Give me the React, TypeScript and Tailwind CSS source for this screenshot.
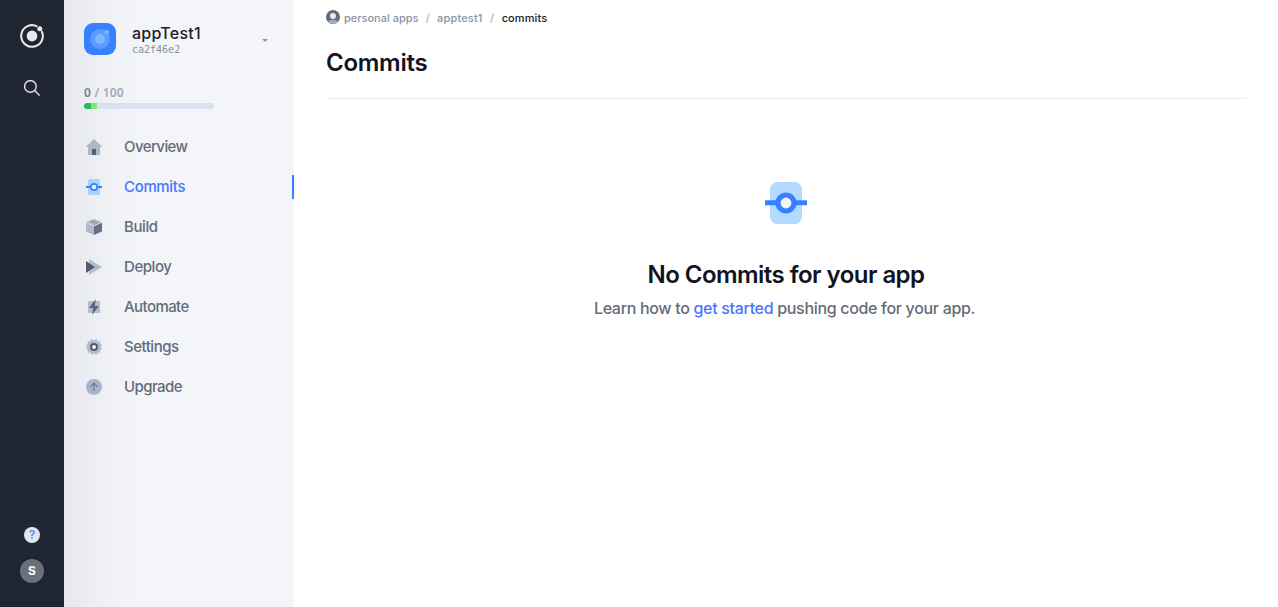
import React from 'react';

function CommitIcon({ size }: { size: string }) {
  return (
    <svg viewBox="0 0 42 42" className={size}>
      <rect x="5" width="32" height="42" rx="7.5" fill="#b2dbff" />
      <path d="M0 18.2h42v5H0z" fill="#3880ff" />
      <circle cx="21" cy="21" r="8" fill="#f3f5f9" stroke="#3880ff" strokeWidth="5.2" />
    </svg>
  );
}

function SmallCommitIcon() {
  return (
    <svg viewBox="0 0 16 16" className="size-4">
      <rect x="2" width="12" height="16" rx="1.8" fill="#a9d4fa" />
      <path d="M0 7h16v2H0z" fill="#3880ff" />
      <circle cx="8" cy="8" r="3.2" fill="#e3f0ff" stroke="#3880ff" strokeWidth="1.7" />
    </svg>
  );
}

const icons: Record<string, React.ReactNode> = {
  Overview: (
    <svg viewBox="0 0 16 16" className="size-4">
      <path d="M8 0 0 7.5V8h2v8h12V8h2v-.5z" fill="#adb9c9" />
      <path d="M6 10h4v6H6z" fill="#585f74" />
    </svg>
  ),
  Commits: <SmallCommitIcon />,
  Build: (
    <svg viewBox="0 0 16 16" className="size-4">
      <path d="m0 3.8 8 3.5V16l-8-3.6z" fill="#b0b9cb" />
      <path d="m8 7.3 8-3.5v8.6L8 16z" fill="#697084" />
      <path d="M8 0 15.8 3.2 8 6.6.2 3.2z" fill="#a9b3c6" />
      <path d="m4.4 2 6.6 2.8 1-.4-6.6-2.8z" fill="#7a8398" />
    </svg>
  ),
  Deploy: (
    <svg viewBox="0 0 16 16" className="size-4">
      <path d="m3 0 13 8-13 8z" fill="#b1bccc" />
      <path d="m0 2 9 6-9 6z" fill="#525a70" />
    </svg>
  ),
  Automate: (
    <svg viewBox="0 0 16 16" className="size-4">
      <rect x="2" y="2" width="12" height="12" rx="1.2" fill="#b1bcd0" />
      <path d="M9.6.3 3 9h4.1l-.9 6.7L13 7H8.9z" fill="#5c6479" />
    </svg>
  ),
  Settings: (
    <svg viewBox="0 0 16 16" className="size-4">
      <path d="M5.4.4 8 1.7 10.6.4l1 2.5 2.6-.7-.5 2.9 2.1.9L14.6 8l1.2 2-2.1.9.5 2.9-2.6-.7-1 2.5L8 14.3l-2.6 1.3-1-2.5-2.6.7.5-2.9-2.1-.9L1.4 8 .2 6l2.1-.9-.5-2.9 2.6.7z" fill="#b1bccc" stroke="#b1bccc" strokeWidth=".5" strokeLinejoin="round" />
      <circle cx="8" cy="8" r="3" fill="#f1f3f8" stroke="#50586e" strokeWidth="2" />
    </svg>
  ),
  Upgrade: (
    <svg viewBox="0 0 16 16" className="size-4">
      <circle cx="8" cy="8" r="8" fill="#a9b5cd" />
      <path d="M8 12V4.5M4.4 7.8 8 4.2l3.6 3.6" fill="none" stroke="#69748b" strokeWidth="1.1" />
    </svg>
  ),
};

const items = [
  { name: 'Overview', style: 'tracking-[-0.58px]' },
  { name: 'Commits', style: 'tracking-[-0.34px]' },
  { name: 'Build', style: 'tracking-[-0.41px]' },
  { name: 'Deploy', style: 'tracking-[-0.43px]' },
  { name: 'Automate', style: 'tracking-[-0.57px]' },
  { name: 'Settings', style: 'tracking-[-0.48px]' },
  { name: 'Upgrade', style: 'tracking-[-0.59px]' },
];

export default function App() {
  return (
    <div className="flex h-[607px] w-[1278px] overflow-hidden bg-white font-['Inter','Liberation_Sans',sans-serif]">
      <aside className="flex w-16 shrink-0 flex-col items-center bg-[#1f2531] pt-6 pb-6">
        <svg viewBox="0 0 24 24" className="size-6">
          <circle cx="12" cy="12" r="5.4" fill="#e6e8ea" />
          <path d="M17.4 2.6A10.8 10.8 0 1 0 21.6 7" fill="none" stroke="#e2e4e7" strokeWidth="2.1" />
          <circle cx="19.8" cy="4.7" r="2.5" fill="#e6e8ea" />
        </svg>
        <svg viewBox="0 0 16 16" className="mt-8 size-4" fill="none" stroke="#e4e7ed" strokeWidth="1.35">
          <circle cx="6.4" cy="6.4" r="5.8" />
          <path d="m10.6 10.6 5 5" />
        </svg>
        <div className="mt-auto flex size-4 items-center justify-center rounded-full bg-[#e0e5ee] text-[12px] font-semibold leading-4 text-[#4d8aff]">?</div>
        <div className="mt-4 flex size-6 items-center justify-center rounded-full bg-[#68717c] text-[12px] font-bold leading-6 text-white">S</div>
      </aside>

      <nav className="flex w-[230px] shrink-0 flex-col bg-[#f3f5f9] bg-[linear-gradient(90deg,#e6e8ed_0px,#e9ebf0_15px,#eceef3_30px,#f0f2f6_48px,#f3f5f9_80px)]">
        <header className="flex h-[78px] items-center pl-5 pr-[26px]">
          <svg viewBox="0 0 32 32" className="size-8 shrink-0">
            <rect width="32" height="32" rx="9" fill="#3880ff" />
            <circle cx="16" cy="16" r="10" fill="#5b9bff" />
            <circle cx="16" cy="16" r="5" fill="#7eb7ff" />
            <circle cx="22.8" cy="9.2" r="2.5" fill="#73b0ff" />
          </svg>
          <div className="ml-4">
            <div className="text-[16px] font-medium leading-5 tracking-[0.24px] text-[#1c202b]">appTest1</div>
            <div className="pt-[1px] font-['DejaVu_Sans_Mono',monospace] text-[10px] leading-[12px] text-[#8492a7]">ca2f46e2</div>
          </div>
          <svg viewBox="0 0 6 3" className="ml-auto mt-[2px] h-[3px] w-[6px]"><path d="M0 0h6L3 3z" fill="#8f969f" /></svg>
        </header>
        <div className="mt-[7px] pl-5">
          <div className="font-['Noto_Sans',sans-serif] text-[12px] font-semibold leading-4 tracking-[0.2px] text-[#a2abba]"><span className="text-[#73808f]">0</span> / 100</div>
          <div className="mt-[2px] flex h-[6px] w-[130px] overflow-hidden rounded-full bg-[#dae1f2]">
            <div className="w-[7px] bg-[#20bf58]" />
            <div className="w-[6px] bg-[#82e76b]" />
          </div>
        </div>
        <ul className="mt-[18px]">
          {items.map(({ name, style }) => (
            <li key={name} className="flex h-10 items-center pl-[22px]">
              {icons[name]}
              <a className={`ml-[22px] text-[15px] font-medium leading-6 ${style} ${name === 'Commits' ? 'text-[#4777ff]' : 'text-[#636c78]'}`}>{name}</a>
              {name === 'Commits' && <span className="ml-auto h-6 w-[2px] bg-[#3880ff]" />}
            </li>
          ))}
        </ul>
      </nav>

      <main className="min-w-0 flex-1 px-8">
        <div className="flex h-9 items-center text-[11px] font-medium text-[#8794a9]">
          <svg viewBox="0 0 14 14" className="mr-1 -mt-[2px] size-[14px]">
            <circle cx="7" cy="7" r="7" fill="#626b79" />
            <path d="M2 11.9Q3 9.7 7 9.7t5 2.2A7 7 0 0 1 2 11.9" fill="#a2adc2" />
            <circle cx="7" cy="5.9" r="3" fill="#e8ebf1" />
          </svg>
          <span>personal apps</span>
          <span className="mx-[7.3px] text-[#a5b0c2]">/</span>
          <span className="tracking-[0.16px]">apptest1</span>
          <span className="mx-[7.5px] text-[#a5b0c2]">/</span>
          <span className="tracking-[0.1px] text-[#1c202b]">commits</span>
        </div>
        <h1 className="flex h-[63px] items-center border-b border-[#e9ebf1] pb-[9px] text-[24px] font-semibold leading-8 tracking-[-0.27px] text-[#10141d]">Commits</h1>
        <section className="flex flex-col items-center pt-[83px]">
          <CommitIcon size="size-[42px]" />
          <h2 className="mt-[35px] text-[24px] font-semibold leading-8 tracking-[-0.54px] text-[#10141d]">No Commits for your app</h2>
          <p className="mt-[5px] mr-[3px] text-[16px] font-medium leading-6 tracking-[-0.32px] text-[#636c78]">
            Learn how to <a className="text-[#4777ff]">get started</a> pushing code for your app.
          </p>
        </section>
      </main>
    </div>
  );
}
